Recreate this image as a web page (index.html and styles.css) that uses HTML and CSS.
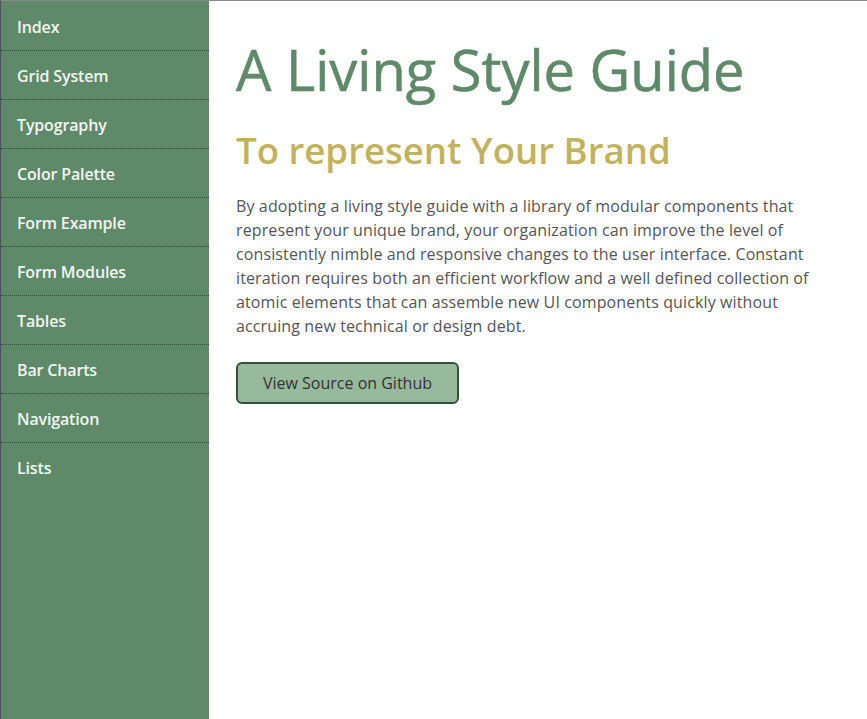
FILE: index.html
```html
<!DOCTYPE html>
<html lang="en">
<head>
<meta charset="utf-8">
<title>A Living Style Guide</title>
<link rel="stylesheet" href="styles.css">
</head>
<body>
<div class="page">
  <nav class="sidebar">
    <ul class="nav-list">
      <li><a href="#">Index</a></li>
      <li><a href="#">Grid System</a></li>
      <li><a href="#">Typography</a></li>
      <li><a href="#">Color Palette</a></li>
      <li><a href="#">Form Example</a></li>
      <li><a href="#">Form Modules</a></li>
      <li><a href="#">Tables</a></li>
      <li><a href="#">Bar Charts</a></li>
      <li><a href="#">Navigation</a></li>
      <li><a href="#">Lists</a></li>
    </ul>
  </nav>
  <main class="content">
    <h1 class="title">A Living Style Guide</h1>
    <h2 class="subtitle">To represent Your Brand</h2>
    <p class="intro">By adopting a living style guide with a library of modular components that represent your unique brand, your organization can improve the level of consistently nimble and responsive changes to the user interface. Constant iteration requires both an efficient workflow and a well defined collection of atomic elements that can assemble new UI components quickly without accruing new technical or design debt.</p>
    <a class="btn" href="#">View Source on Github</a>
  </main>
</div>
</body>
</html>
```
FILE: styles.css
```css
html, body {
  margin: 0;
  padding: 0;
  height: 100%;
}
body {
  font-family: "Open Sans", "Noto Sans", sans-serif;
  background: #ffffff;
  border-top: 1px solid #8a8a8a;
  border-left: 1px solid #4a5260;
  box-sizing: border-box;
}
.page {
  display: flex;
  min-height: 100%;
}
.sidebar {
  width: 208px;
  flex: none;
  background: #5e8a69;
}
.nav-list {
  list-style: none;
  margin: 0;
  padding: 1px 0 0;
}
.nav-list li {
  border-bottom: 1px dotted #2f4636;
}
.nav-list li:last-child {
  border-bottom: none;
}
.nav-list a {
  display: block;
  height: 48px;
  line-height: 50px;
  padding-left: 16px;
  color: #f4f6f2;
  text-decoration: none;
  font-size: 16px;
  font-weight: 600;
  letter-spacing: -0.15px;
}
.content {
  flex: 1;
  padding: 0 27px;
}
.title {
  margin: 33px 0 0;
  font-size: 56px;
  font-weight: 400;
  line-height: 70px;
  color: #5e8a69;
  -webkit-text-stroke: 0.6px #5e8a69;
}
.subtitle {
  margin: 21px 0 0;
  font-size: 36.6px;
  font-weight: 600;
  line-height: 50px;
  color: #c2b25b;
}
.intro {
  margin: 19px 0 0;
  max-width: 580px;
  font-size: 16px;
  line-height: 24px;
  letter-spacing: 0.12px;
  color: #555555;
}
.btn {
  display: inline-block;
  margin-top: 24px;
  width: 219px;
  height: 38px;
  line-height: 38px;
  text-align: center;
  box-sizing: content-box;
  background: #97b99c;
  border: 2px solid #34503a;
  border-radius: 6px;
  color: #333333;
  font-size: 16px;
  text-decoration: none;
}
```
